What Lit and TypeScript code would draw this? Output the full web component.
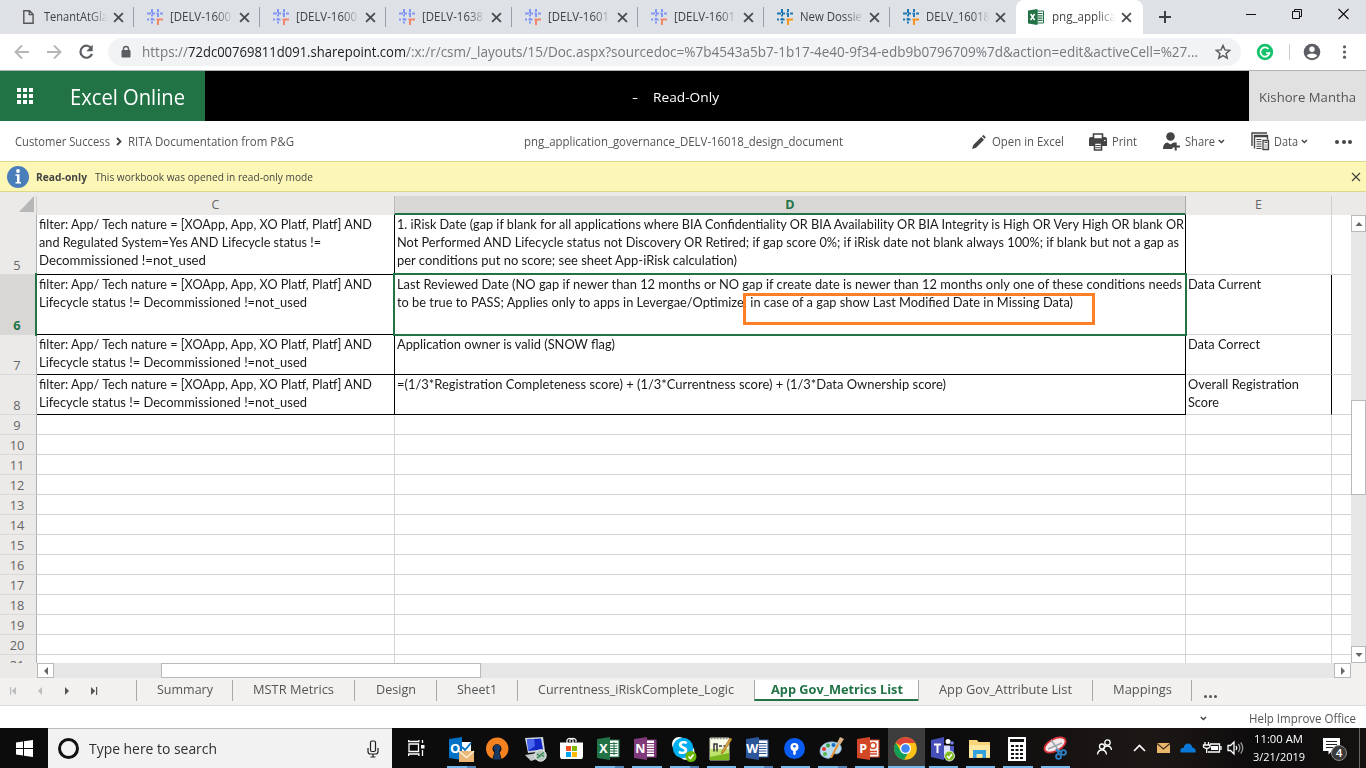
import { LitElement, html, svg, css, nothing } from "lit";
import { customElement, property, query } from "lit/decorators.js";

/** A single line of text, condensed or widened to an exact advance width. */
@customElement("fit-text")
class FitText extends LitElement {
  static styles = css`
    :host { display: block; flex: none; white-space: pre; }
    span { display: inline-block; transform-origin: 0 50%; }
  `;
  @property({ type: Number }) w = 0;
  @property() text = "";
  @query("span") inner!: HTMLElement;
  render() { return html`<span>${this.text}</span>`; }
  updated() {
    this.style.width = this.w + "px";
    const natural = this.inner.offsetWidth ? this.inner.getBoundingClientRect().width : 0;
    if (natural) this.inner.style.transform = `scaleX(${this.w / natural})`;
  }
}

const t = (text: string, w: number, cls = "") => html`<fit-text class=${cls} .text=${text} .w=${w}></fit-text>`;

const hash = (a: string, b: string) => html`<svg width="16" height="16" viewBox="0 0 16 16" fill="none" stroke-width="2">
  <path stroke=${a} d="M5 0v4M5 5.500v2M5 9v2M5 12.500v2M11 0v3M11 4v4M0 4.500h4M5 4.500h3M9.500 4.500h2M13 4.500h3M0 10.500h2M3.500 10.500h4"/>
  <path stroke=${b} d="M9.500 10.500h6.500M11 10v6"/></svg>`;
const page = html`<svg width="16" height="16" viewBox="0 0 16 16"><path d="M2.800 1.700h5.700l3.600 3.600v9H2.800z M8.300 1.900v3.700h3.600" fill="none" stroke="#555" stroke-width="1.400"/></svg>`;
const excelFav = html`<svg width="16" height="16" viewBox="0 0 16 16"><path d="M9 2h6.500v12H9z" fill="#fff" stroke="#217346"/><path d="M10 4.500h4.500M10 6.800h4.500M10 9.100h4.500M10 11.400h4.500" stroke="#217346" stroke-width="1.200"/><path d="M0 1.500 9.500 0v16L0 14.500z" fill="#217346"/><path d="m2.600 5 4 6M6.600 5l-4 6" stroke="#fff" stroke-width="1.500"/></svg>`;
const cross = (s: number, c = "#4a4d51", sw = 1.7) => html`<svg width=${s} height=${s} viewBox="0 0 10 10"><path d="M1 1l8 8M9 1l-8 8" stroke=${c} stroke-width=${sw} fill="none"/></svg>`;
const chev = html`<svg class="chev" width="7" height="5" viewBox="0 0 7 5"><path d="M.8 1l2.600 2.500L6 1" fill="none" stroke="#444" stroke-width="1.500"/></svg>`;
const arrow = (d: string, c = "#666") => html`<svg width="10" height="10" viewBox="0 0 10 10"><path d=${d} fill=${c}/></svg>`;

const tabs: { icon: unknown; text: string; w: number; on?: boolean }[] = [
  { icon: page, text: "TenantAtGla", w: 64 },
  ...["[DELV-1600", "[DELV-1600", "[DELV-1638", "[DELV-1601", "[DELV-1601"].map((x) => ({ icon: hash("#8297f4", "#f0876c"), text: x, w: 61 })),
  { icon: hash("#1f78b4", "#f7941d"), text: "New Dossie", w: 62 },
  { icon: hash("#1f78b4", "#f7941d"), text: "DELV_16018", w: 64 },
  { icon: excelFav, text: "png_applica", w: 64, on: true },
];

const LC: [string, number] = ["Lifecycle status != Decommissioned !=not_used", 268];
const FL: [string, number] = ["filter: App/ Tech nature = [XOApp, App, XO Platf, Platf] AND", 333];
type Line = [string, number];
const rows: { n: number; cls: string; c: Line[]; d: Line[]; e: Line[] }[] = [
  { n: 5, cls: "tall first", c: [FL, ["and Regulated System=Yes AND Lifecycle status !=", 282], ["Decommissioned !=not_used", 167]],
    d: [["1. iRisk Date (gap if blank for all applications where BIA Confidentiality OR BIA Availability OR BIA Integrity is High OR Very High OR blank OR", 787],
      ["Not Performed AND Lifecycle status not Discovery OR Retired; if gap score 0%; if iRisk date not blank always 100%; if blank but not a gap as", 782],
      ["per conditions put no score; see sheet App-iRisk calculation)", 340]], e: [] },
  { n: 6, cls: "tall cur", c: [FL, LC],
    d: [["Last Reviewed Date (NO gap if newer than 12 months or NO gap if create date is newer than 12 months only one of these conditions needs", 785],
      ["to be true to PASS; Applies only to apps in Levergae/Optimize; in case of a gap show Last Modified Date in Missing Data)", 676]],
    e: [["Data Current", 73]] },
  { n: 7, cls: "mid", c: [FL, LC], d: [["Application owner is valid (SNOW flag)", 218]], e: [["Data Correct", 72]] },
  { n: 8, cls: "mid", c: [FL, LC], d: [["=(1/3*Registration Completeness score) + (1/3*Currentness score) + (1/3*Data Ownership score)", 549]],
    e: [["Overall Registration", 111], ["Score", 31]] },
];

const sheets: { text: string; slot: number; w: number; on?: boolean }[] = [
  { text: "Summary", slot: 96, w: 56 }, { text: "MSTR Metrics", slot: 122, w: 81 },
  { text: "Design", slot: 82, w: 40 }, { text: "Sheet1", slot: 81, w: 40 },
  { text: "Currentness_iRiskComplete_Logic", slot: 237, w: 196 },
  { text: "App Gov_Metrics List", slot: 164, w: 132, on: true },
  { text: "App Gov_Attribute List", slot: 174, w: 133 }, { text: "Mappings", slot: 99, w: 59 },
];

/** Office tile: a slanted colour panel with a letter and a sheet behind it. */
const office = (c: string, l: string, art: unknown) => svg`
  <path d="M12 4h11v17H12z" fill="#fff" stroke=${c} stroke-width="1.200"/>${art}
  <path d="M1 3 14 1v23L1 22z" fill=${c}/>
  <text x="7.300" y="17" text-anchor="middle" font-size="12.500" font-weight="700" fill="#fff" font-family="Open Sans, sans-serif">${l}</text>`;
const lines = (c: string) => svg`<path d="M14 7.500h7.500M14 10h7.500M14 12.500h7.500M14 15h7.500M14 17.500h7.500" stroke=${c} stroke-width="1.200"/>`;

const apps: { line: string; art: unknown }[] = [
  { line: "split", art: svg`<path d="M12 6h11v12H12z" fill="#fff"/><path d="m14 11 3 3 6-7" fill="none" stroke="#0072c6" stroke-width="1.800"/><path d="M1 3 14 1v23L1 22z" fill="#0072c6"/><text x="7.300" y="17" text-anchor="middle" font-size="13" font-weight="700" fill="#fff" font-family="Open Sans, sans-serif">O</text><path d="M11 15h15v11H11z" fill="#eab676"/><path d="m11 15 7.500 6.500L26 15" fill="none" stroke="#fff2dc" stroke-width="1.400"/>` },
  { line: "", art: svg`<path d="M7.500 22.800a11.200 11.200 0 1 1 9 .2l-1.800-6.700a4.500 4.500 0 1 0-5.400 0z" fill="#f58220"/><circle cx="12" cy="12" r="3.500" fill="#1a3a66"/><path d="M10.500 13h3l2.300 10.500H8.200z" fill="#1a3a66"/>` },
  { line: "", art: svg`<path d="m3 2 18-1 2 14-17 2z" fill="#ccd6dc"/><path d="m5 3.500 14-1 2 11-14 1.500z" fill="#1428c8"/><path d="m5 3.500 7-.5 1 7-7 5z" fill="#4866ee"/><path d="m3 19 13-2 5 4-12 4z" fill="#c6c9ca"/><circle cx="18.500" cy="19.500" r="5.700" fill="#b8c7bd" stroke="#eef2ef"/><path d="m15 18 3 2-3 2M22 16.500l-3 2 3 2" stroke="#26814c" fill="none" stroke-width="1.300"/>` },
  { line: "", art: svg`<path d="M1 6.500h23v14.500l-1 2H2l-1-2z" fill="#fff"/><path d="M8 7V4a3.500 3.500 0 0 1 6 0v4M11 6V4a3.500 3.500 0 0 1 6 0v2" fill="none" stroke="#fff" stroke-width="1.200"/><path d="M7 10h5v5H7z" fill="#f25022"/><path d="M13 10h5v5h-5z" fill="#7fba00"/><path d="M7 16h5v5H7z" fill="#00a4ef"/><path d="M13 16h5v5h-5z" fill="#ffb900"/>` },
  { line: "split", art: office("#217346", "X", svg`${lines("#217346")}<path d="M18 6v13" stroke="#217346"/>`) },
  { line: "full", art: office("#80397b", "N", svg`${lines("#80397b")}<path d="M21 4h2v17h-2z" fill="#80397b"/>`) },
  { line: "split", art: svg`<circle cx="8" cy="8" r="7" fill="#fff"/><circle cx="15.500" cy="16" r="8" fill="#fff"/><circle cx="12" cy="12" r="10.200" fill="#00aff0"/><text x="11.800" y="18.300" text-anchor="middle" font-size="18" font-weight="700" fill="#fff" font-family="Open Sans, sans-serif">S</text><circle cx="20" cy="20.500" r="5.500" fill="#6bb700"/><path d="m17.500 20.500 2 2 3-4" fill="none" stroke="#fff" stroke-width="1.600"/>` },
  { line: "full", art: svg`<path d="M2 2h19v22H2z" fill="#fafbe8" stroke="#cfd4b8"/><path d="M2 14h19v10H2z" fill="#79b51c"/><path d="M2 13h19v4L2 21z" fill="#bfe36b"/><path d="M3 2.500h18" stroke="#888" stroke-width="1.500" stroke-dasharray="1.500 1.500"/><path d="M6 15.500V8h3v7.500M11 10h3M15.500 10h3" stroke="#333" stroke-width="1.500" fill="none"/><path d="m14 15 8-13 2 1-8 13-2.500 2z" fill="#dca33b" stroke="#8b5a22" stroke-width=".6"/>` },
  { line: "split", art: office("#2b579a", "W", lines("#2b579a")) },
  { line: "full", art: svg`<circle cx="12.500" cy="12.500" r="10.500" fill="#0a5cf0"/><circle cx="12.500" cy="11" r="4" fill="#fff"/><path d="M11.200 13h2.600v5l-1.300 1.200-1.300-1.200z" fill="#fff"/><circle cx="12.500" cy="10.300" r="1.300" fill="#0a5cf0"/>` },
  { line: "split", art: svg`<path d="M1 15C1 9 8 5 15 6s9 6 6 10-7 0-8 3-3 4-6 3-6-3-6-7z" fill="#b9d9ef" stroke="#7fa9c6" stroke-width=".7"/><circle cx="5" cy="13" r="2" fill="#e2382b"/><circle cx="9" cy="9.500" r="2" fill="#35a344"/><circle cx="14.500" cy="9" r="2" fill="#1b6fc0"/><circle cx="6" cy="18" r="2" fill="#55b848"/><path d="m11 22 7-14 2 1-7 13z" fill="#e7912f"/><path d="m18 7 3-6 4 2-4 6z" fill="#d9b384"/>` },
  { line: "full", art: office("#d24726", "P", svg`<circle cx="17" cy="9.500" r="3" fill="none" stroke="#d24726" stroke-width="1.500"/><path d="M13 15.500h8M13 18h8" stroke="#d24726" stroke-width="1.300"/>`) },
  { line: "wide", art: svg`<circle cx="12.500" cy="12.500" r="11.300" fill="#fbc116"/><path d="M12.500 12.500 2.700 6.800A11.300 11.300 0 0 1 22.300 6.900H12.500z" fill="#db4437"/><path d="M2.700 6.800a11.300 11.300 0 0 0 8.300 17l5-8.500-3.500-3-4.900 2.800z" fill="#0f9d58"/><circle cx="12.500" cy="12.500" r="5.500" fill="#fff"/><circle cx="12.500" cy="12.500" r="4.300" fill="#4285f4"/>` },
  { line: "full", art: svg`<circle cx="18" cy="5.500" r="2.500" fill="#fff"/><circle cx="22" cy="7" r="1.800" fill="#7b83eb"/><path d="M13 10h11v7q-3 5-8 3z" fill="#5059c9"/><path d="M14 9.500h6v9h-6z" fill="#dfe0ff"/><path d="M1 4 14 1v23L1 21z" fill="#464eb8"/><path d="M4 8.500h7M7.500 8.500V17" stroke="#fff" stroke-width="2"/><circle cx="19.500" cy="20" r="5" fill="#7fba20" stroke="#fff" stroke-width=".8"/><path d="m17 20 2 2 3-4" fill="none" stroke="#fff" stroke-width="1.500"/>` },
  { line: "full", art: svg`<path d="M2 4h8l1.500 2H23v16H2z" fill="#f7d37a"/><path d="M2 9h21v12H2z" fill="#fce8a0"/><path d="M6 22v-8h13v8h-3.500v-4h-6v4z" fill="#33a0df"/>` },
  { line: "full", art: svg`<path d="M4 1h18v24H4z" fill="#fff"/><path d="M6 4.500h14" stroke="#111" stroke-width="3"/><path d="M7 10h3M11.500 10h3M16 10h3M7 14h3M11.500 14h3M16 14h3M7 18h3M11.500 18h3M16 18h3M7 22h3M11.500 22h3M16 22h3" stroke="#111" stroke-width="1.800"/>` },
  { line: "full", art: svg`<ellipse cx="13" cy="9" rx="11.500" ry="6" transform="rotate(-28 13 9)" fill="#f6e9ea" stroke="#d7323b" stroke-width="1.800"/><path d="m9 4 9 12M6 13l14-6" stroke="#9ba7b0" stroke-width="1.500"/><circle cx="16.500" cy="20.500" r="2.400" fill="none" stroke="#2e83c8" stroke-width="1.800"/><circle cx="21.500" cy="16.500" r="2.400" fill="none" stroke="#2e83c8" stroke-width="1.800"/><path d="m14 13 3 5M14 14l6 2" stroke="#2e83c8" stroke-width="1.600"/>` },
];

@customElement("app-root")
class AppRoot extends LitElement {
  static styles = css`
    :host { display: flex; flex-direction: column; width: 1366px; height: 768px; overflow: hidden; background: #fff; color: #444;
      font-family: "Open Sans", "Noto Sans", sans-serif; font-size: 12px; line-height: 18px; }
    * { box-sizing: border-box; }
    svg { display: block; flex: none; }
    .row { display: flex; align-items: center; flex: none; }

    .strip { height: 34px; background: #dee1e6; padding-left: 8px; align-items: stretch; }
    .tab { width: 126px; flex: none; display: flex; align-items: center; padding-left: 13px; }
    .tab .line { width: 1px; height: 20px; flex: none; background: #9b9ea4; margin: 0 -1px 0 9px; }
    .tab .name { width: 65px; flex: none; overflow: hidden; margin: 0 4px 0 7px; font-size: 12px; color: #3f4246;
      -webkit-mask-image: linear-gradient(90deg, #000 70%, transparent 98%); mask-image: linear-gradient(90deg, #000 70%, transparent 98%); }
    .tab.on { background: #fff; border-radius: 8px 8px 0 0; width: 127px; padding-left: 12px; }
    .tab.on .name { color: #444; margin: 0 4px 0 8px; }
    .plus { margin: 11px 75px 0 16px; }
    .win { display: flex; gap: 35px; padding-top: 8px; }

    .nav { height: 36px; padding-left: 14px; }
    .omni { width: 1133px; height: 28px; border-radius: 14px; background: #f1f3f4; margin-left: 14px; padding-left: 12px; font-size: 14.500px; color: #75797e; }
    .omni .host { color: #202124; }
    .omni svg.lock { margin-right: 10px; }
    .omni .star { margin-left: 17px; }
    .edge { height: 1px; background: #b4b4b4; flex: none; }

    .brand { height: 50px; background: #000; align-items: stretch; }
    .brand .green { width: 205px; background: #217346; display: flex; align-items: center; color: #fff; padding-left: 17px; }
    .xl { font-size: 21px; margin-left: 36px; line-height: 28px; padding-top: 2px; }
    .ro { display: flex; align-items: center; color: #fff; font-size: 13px; font-weight: 500; gap: 15px; margin-left: 427px; padding-top: 2px; }
    .user { width: 117px; background: #e1e1e1; margin-left: auto; font-size: 13.500px; color: #555; display: flex; align-items: center; padding: 2px 0 0 10px; }

    .cmd { height: 40px; padding-top: 1px; padding-left: 15px; color: #555; font-size: 12.300px; }
    .gt { margin: 0 6px; }
    .doc { margin: 0 129px 0 230px; }
    .g7 { margin-left: 6px; } .g5 { margin-left: 5px; } .g4 { margin-left: 4px; }
    .printer { margin-left: 25px; }
    .person, .table { margin-left: 26px; }
    .chev { margin-left: 3px; }
    .dots { display: flex; gap: 2.600px; margin-left: 27px; padding-top: 1px; }
    .dots i { width: 4px; height: 4px; border-radius: 50%; background: #444; }

    .info { height: 31px; background: #fcf7b6; border-top: 1px solid #dcd88a; border-bottom: 1px solid #dcd88a; padding-left: 7px; font-size: 11.300px; color: #444; padding-top: 1px; }
    .info .b { font-weight: 700; margin: 0 8px 0 7px; }
    .info .x { margin-left: auto; margin-right: 5px; }

    .heads { height: 23px; background: #ebeae9; padding-top: 4px; align-items: stretch; flex: none; display: flex; font-size: 12.500px; color: #666; }
    .corner { width: 37px; border-right: 1px solid #cfcfcf; padding-left: 19px; }
    .heads .h { height: 19px; display: flex; justify-content: center; align-items: center; border-right: 1px solid #cfcfcf; line-height: 17px; padding-bottom: 2px; }
    .heads .hd { background: #d8d7d6; color: #217346; font-weight: 700; border-bottom: 2px solid #217346; margin-left: -1px; width: 792px; border-left: 1px solid #bbb; border-right-color: #aaa; padding: 0; }
    .c { width: 358px; } .d { width: 791px; } .e { width: 146px; } .f { width: 19px; }

    .body { display: flex; flex: none; height: 448px; }
    .sheet { width: 1351px; overflow: hidden; position: relative; }
    .r { display: flex; height: 20px; }
    .tall { height: 60px; } .mid { height: 40px; }
    .n { width: 37px; flex: none; background: #ebeae9; border-right: 1px solid #b1b1b1; border-bottom: 1px solid #d9d9d9; display: flex; align-items: flex-end; justify-content: center; font-size: 12.800px; line-height: 17px; color: #666; padding-right: 2px; }
    .cur .n { background: #d8d7d6; color: #217346; font-weight: 700; }
    .cell { flex: none; border-right: 1px solid #d4d4d4; border-bottom: 1px solid #d4d4d4; padding: 0 0 0 2px; overflow: hidden;
      font-family: Lato, "Open Sans", sans-serif; font-size: 13.300px; line-height: 18px; color: #1a1a1a; }
    .tall .c, .tall .d, .mid .c, .mid .d { border-color: #000; }
    .cur .e, .mid .e { border-right-color: #000; }
    .f { border-right: 0; }
    .sel { position: absolute; left: 393px; top: 58px; width: 794px; height: 63px; border: 2px solid #217346; }
    .selrow { position: absolute; left: 35px; top: 58px; width: 2px; height: 63px; background: #217346; }
    .mark { position: absolute; left: 743px; top: 78px; width: 352px; height: 32px; border: 3px solid #ff7f27; }

    .vs { width: 15px; background: #e6e6e6; display: flex; flex-direction: column; }
    .btn { background: #fff; border: 1px solid #b9b9b9; display: flex; align-items: center; justify-content: center; flex: none; }
    .vs .btn { width: 15px; height: 17px; }
    .vs .thumb { height: 95px; margin-top: 168px; }
    .vs .down { margin-top: auto; }
    .hs { height: 15px; background: #e6e6e6; align-items: stretch; }
    .hs .pad { width: 37px; background: #ebeae9; }
    .hs .btn { width: 17px; }
    .hs .thumb { width: 320px; margin-left: 107px; }
    .hs .right { margin-left: auto; }
    .hs .end { width: 15px; background: #f2f1f0; }

    .sheets { height: 28px; background: #f2f1f0; border-bottom: 1px solid #dcdcdc; padding: 2px 0 4px 8px; align-items: stretch; font-size: 12.600px; color: #555; }
    .pager { display: flex; align-items: center; width: 128px; gap: 17px; }
    .s { display: flex; justify-content: center; border-left: 1px solid #a8a8a8; padding-top: 1px; line-height: 17px; flex: none; }
    .s.on { background: #fff; color: #217346; font-weight: 700; border-bottom: 2px solid #217346; }
    .more { border-left: 1px solid #a8a8a8; padding: 15px 0 0 12px; display: flex; gap: 2px; }
    .more i { width: 3px; height: 3px; border-radius: 50%; background: #555; }
    .status { height: 22px; padding: 3px 10px 0 0; justify-content: flex-end; font-size: 12.200px; color: #555; }
    .status .go { margin-left: 42px; }

    .bar { height: 40px; background: linear-gradient(90deg, #0c0c0c 70%, #1d1816 84%, #0d0c0c 92%, #151211); align-items: stretch; color: #fff; }
    .start { width: 48px; flex: none; display: flex; align-items: center; justify-content: center; }
    .search { width: 344px; flex: none; background: #f2f2f2; border-top: 1px solid #bbb; display: flex; align-items: center; color: #2f2f2f; font-size: 14.500px; padding-left: 9px; }
    .search .q { margin: 0 150px 0 9px; }
    .ring { margin-left: 1px; }
    .tv { width: 51px; flex: none; display: flex; align-items: center; justify-content: center; padding-right: 3px; }
    .app { width: 37.100px; padding: 8px 4px 0; display: flex; flex-direction: column; justify-content: space-between; flex: none; }
    .app svg { margin-left: 1px; }
    .u { height: 2px; }
    .full .u, .wide .u { background: #76b9ed; }
    .split .u { background: linear-gradient(90deg, #76b9ed 20px, #5284b5 20px); }
    .wide { background: #3d3d3d; padding-left: 0; padding-right: 0; }
    .wide svg { margin-left: 5px; }
    .tray { display: flex; align-items: center; padding-left: 22px; }
    .clock { display: flex; flex-direction: column; align-items: center; width: 54px; flex: none; margin-left: -4px; font-size: 11.500px; line-height: 18px; padding-bottom: 1px; }
    .note { margin-left: 17px; }
    .peek { width: 1px; height: 40px; background: #666; margin-left: 10px; }
  `;

  render() {
    return html`
      <div class="row strip">
        ${tabs.map((x, i) => html`<div class="tab ${x.on ? "on" : ""}">${x.icon}
          <div class="name">${t(x.text, x.w)}</div>${cross(11)}
          ${x.on || i === 7 ? nothing : html`<div class="line"></div>`}</div>`)}
        <svg class="plus" width="12" height="12" viewBox="0 0 12 12"><path d="M6 0v12M0 6h12" stroke="#3c4043" stroke-width="2"/></svg>
        <div class="win">
          <svg width="11" height="12" viewBox="0 0 11 12"><path d="M0 6.500h10" stroke="#111"/></svg>
          <svg width="11" height="12" viewBox="0 0 11 12"><path d="M.5 3.500h7v7h-7zM2.500 3.500v-2h7v7h-2" stroke="#111" fill="none"/></svg>
          <svg width="11" height="12" viewBox="0 0 11 12"><path d="M.5 1l10 10M10.500 1l-10 10" stroke="#111" stroke-width="1.100"/></svg>
        </div>
      </div>
      <div class="row nav">
        <svg width="80" height="16" viewBox="0 0 80 16" fill="none" stroke="#b5b6b8" stroke-width="1.900"><path d="M15 8H2M8 1.500 1.500 8 8 14.500M33 8h13M40 1.500 46.500 8 40 14.500"/><path d="M77.500 4.500A6 6 0 1 0 78 10" stroke="#5a5d61" stroke-width="2.200"/><path d="M78.700.8v6.400h-6.400z" fill="#5a5d61" stroke="none"/></svg>
        <div class="row omni">
          <svg class="lock" width="12" height="14" viewBox="0 0 12 14"><path d="M2 5.500h8v6.500H2z" fill="#5a5d61" stroke="#5a5d61"/><path d="M3.500 5.500V4a2.500 2.500 0 0 1 5 0v1.500" fill="none" stroke="#5a5d61" stroke-width="1.400"/></svg>
          ${t("https://", 46)}${t("72dc00769811d091.sharepoint.com", 218, "host")}${t("/:x:/r/csm/_layouts/15/Doc.aspx?sourcedoc=%7b4543a5b7-1b17-4e40-9f34-edb9b0796709%7d&action=edit&activeCell=%27...", 792)}
          <svg class="star" width="16" height="16" viewBox="0 0 16 16"><path d="m8 1.500 1.900 4.400 4.800.4-3.600 3.200 1.100 4.700L8 11.700l-4.200 2.500 1.100-4.700L1.300 6.300l4.800-.4z" fill="none" stroke="#5a5d61" stroke-width="1.500"/></svg>
        </div>
        <svg width="110" height="20" viewBox="0 0 110 20"><circle cx="24" cy="10" r="8.200" fill="#15c26b"/><path d="M27.500 7A4.600 4.600 0 1 0 28.500 11h-3.500" fill="none" stroke="#fff" stroke-width="1.700"/><path d="M48.500 2v16" stroke="#ccc"/><circle cx="71" cy="10" r="8.300" fill="#5a5d61"/><circle cx="71" cy="7.300" r="2.700" fill="#fff"/><path d="M65.800 13.800c1.500-3 8.900-3 10.400 0-2.700 3.200-7.700 3.200-10.400 0z" fill="#fff"/><g fill="#5a5d61"><circle cx="103.500" cy="4.800" r="1.600"/><circle cx="103.500" cy="10" r="1.600"/><circle cx="103.500" cy="15.200" r="1.600"/></g></svg>
      </div>
      <div class="edge"></div>
      <div class="row brand">
        <div class="green"><svg width="17" height="17" viewBox="0 0 17 17" fill="#fff"><path d="M0 0h4v4H0zM6 0h4v4H6zM12 0h4v4h-4zM0 6h4v4H0zM6 6h4v4H6zM12 6h4v4h-4zM0 12h4v4H0zM6 12h4v4H6zM12 12h4v4h-4z"/></svg>${t("Excel Online", 115, "xl")}</div>
        <div class="ro">${t("-", 6)}${t("Read-Only", 66)}</div>
        <div class="user">${t("Kishore Mantha", 97)}</div>
      </div>
      <div class="row cmd">
        ${t("Customer Success", 95)}<svg class="gt" width="6" height="9" viewBox="0 0 6 9"><path d="M1 1l3.500 3.500L1 8" fill="none" stroke="#444" stroke-width="1.800"/></svg>${t("RITA Documentation from P&G", 166)}
        <div class="doc">${t("png_application_governance_DELV-16018_design_document", 319)}</div>
        <svg width="14" height="14" viewBox="0 0 14 14" fill="#444"><path d="M0 14l1.300-4L9.300 2l2.700 2.700-8 8zM10 1.300 11.200 0q1.300 0 2.500 2.500l-1 1.300z"/></svg>
        <div class="g7">${t("Open in Excel", 72)}</div>
        <svg class="printer" width="18" height="18" viewBox="0 0 18 18"><path d="M0 6q0-2 2-2h14q2 0 2 2v7H0z" fill="#444"/><path d="M4.500 1h9v5h-9zM5.500 10h7v7h-7z" fill="#fff" stroke="#444" stroke-width="1.600"/><path d="M6.500 12.500h5M6.500 14.700h5" stroke="#444"/><path d="M15 7.500h1.500" stroke="#fff"/></svg>
        <div class="g5">${t("Print", 25)}</div>
        <svg class="person" width="18" height="19" viewBox="0 0 18 19" fill="#444"><circle cx="7.500" cy="4.500" r="4.300"/><path d="M0 17q0-6 4.500-6.500l3 2 3-2 2 .5v3h-3v3z"/><path d="M12.700 10.500v8M8.700 14.500h8.300" stroke="#444" stroke-width="2"/></svg>
        <div class="g4">${t("Share", 30)}</div>${chev}
        <svg class="table" width="19" height="19" viewBox="0 0 19 19" fill="none" stroke="#444"><path d="M1 14V1h15M3.500 16.500v-13h13v4M3.500 4.500h13" stroke-width="1.400"/><path d="M5.500 7.500h5M5.500 9.700h5M5.500 12h5M5.500 14.300h5M5.500 16.500h5"/><path d="M12 8.500h5.500v9H12z" fill="#fff" stroke-width="1.300"/><path d="M13.500 10.500h3M13.500 13h1M15.500 13h1M13.500 15h1M15.500 15h1"/></svg>
        <div class="g4">${t("Data", 24)}</div>${chev}
        <div class="dots"><i></i><i></i><i></i></div>
      </div>
      <div class="row info">
        <svg width="22" height="22" viewBox="0 0 22 22"><circle cx="11" cy="11" r="11" fill="#4a7ebb"/><circle cx="11" cy="5" r="1.900" fill="#fff"/><path d="M8.500 8.300h4v7.700H14v1.500H8.500V16H10V9.800H8.500z" fill="#fff"/></svg>
        ${t("Read-only", 51, "b")}${t("This workbook was opened in read-only mode", 218)}
        <div class="x">${cross(10, "#444", 1.2)}</div>
      </div>
      <div class="heads">
        <div class="corner"><svg width="15" height="16" viewBox="0 0 15 16"><path d="M15 0v16H0z" fill="#b7b7b7"/></svg></div>
        <div class="h c">C</div><div class="h hd">D</div><div class="h e">E</div>
      </div>
      <div class="body">
        <div class="sheet">
          ${rows.map((r) => html`<div class="r ${r.cls}"><div class="n">${r.n}</div>
            <div class="cell c">${r.c.map((l) => t(l[0], l[1]))}</div>
            <div class="cell d">${r.d.map((l) => t(l[0], l[1]))}</div>
            <div class="cell e">${r.e.map((l) => t(l[0], l[1]))}</div><div class="cell f"></div></div>`)}
          ${Array.from({ length: 13 }, (_, i) => html`<div class="r"><div class="n">${i + 9}</div><div class="cell c"></div><div class="cell d"></div><div class="cell e"></div><div class="cell f"></div></div>`)}
          <div class="sel"></div><div class="selrow"></div><div class="mark"></div>
        </div>
        <div class="vs"><div class="btn">${arrow("M1.500 7 5 3l3.500 4z")}</div><div class="btn thumb"></div><div class="btn down">${arrow("M1.500 3h7L5 7z")}</div></div>
      </div>
      <div class="row hs"><div class="pad"></div><div class="btn">${arrow("M7 1v8L3 5z")}</div><div class="btn thumb"></div><div class="btn right">${arrow("M3 1v8l4-4z")}</div><div class="end"></div></div>
      <div class="row sheets">
        <div class="pager">${arrow("M2 1h1.200v8H2zM8 1v8L3.800 5z", "#bdbdbd")}${arrow("M7 1v8L3 5z", "#bdbdbd")}${arrow("M3 1v8l4-4z", "#555")}${arrow("M2 1v8l4.200-4zM7 1h1.200v8H7z", "#555")}</div>
        ${sheets.map((s) => html`<div class="s ${s.on ? "on" : ""}" style="width:${s.slot}px">${t(s.text, s.w)}</div>`)}
        <div class="more"><i></i><i></i><i></i></div>
      </div>
      <div class="row status">${chev}<div class="go">${t("Help Improve Office", 107)}</div></div>
      <div class="row bar">
        <div class="start"><svg width="17" height="17" viewBox="0 0 17 17" fill="#fff"><path d="M0 2.500 7 1.500V8H0zM8 1.300 17 0v8H8zM0 9h7v6.500l-7-1zM8 9h9v8l-9-1.300z"/></svg></div>
        <div class="search"><svg class="ring" width="22" height="22" viewBox="0 0 22 22"><circle cx="10.500" cy="10.500" r="9" fill="none" stroke="#111" stroke-width="3"/></svg>
          <div class="q">${t("Type here to search", 128)}</div>
          <svg width="12" height="18" viewBox="0 0 12 18" fill="none" stroke="#222" stroke-width="1.200"><rect x="3.500" y="1" width="5" height="10.500" rx="1.500"/><path d="M1 8v3.500q0 2.500 2.500 2.500h5q2.500 0 2.500-2.500V8M6 14v3M3.500 17h5"/></svg></div>
        <div class="tv"><svg width="17" height="16" viewBox="0 0 17 16" fill="none" stroke="#fff" stroke-width="1.300"><path d="M1 4h9.500v7.500H1zM.6 0v1.500h10.300V0M.6 16v-2h10.300v2M14.500 0v3M14.500 10v6"/><path d="M13 5h3.500v3.500H13z" fill="#fff" stroke="none"/></svg></div>
        ${apps.map((a) => html`<div class="app ${a.line}"><svg width="28" height="27" viewBox="0 0 28 27">${a.art}</svg><div class="u"></div></div>`)}
        <div class="tray">
          <svg width="160" height="24" viewBox="0 0 160 24" fill="none" stroke="#fff" stroke-width="1.300">
            <circle cx="11.500" cy="6.500" r="2.700"/><path d="M7.500 14q.5-4 4-4t4 4"/><circle cx="6" cy="10.500" r="2.500"/><path d="M1.500 18.500q.5-4.500 4.500-4.500t4.500 4.500"/>
            <path d="m38 15 5.500-5.500L49 15" stroke-width="1.600"/>
            <path d="M61 7h13v10H61z" fill="#e8b76c" stroke="none"/><path d="m61 7.500 6.500 5.500L74 7.500" stroke="#463518"/>
            <path d="M84.500 16.500q-1-5 3-4.500 1.500-6 6.500-4 2 1 2.500 3.500 4 1 3 5z" fill="#0a78d7" stroke="none"/>
            <path d="M114 8h9.500v8H112M125 10v4"/><path d="M115 10h7v4h-7z" fill="#fff" stroke="none"/><path d="M109 6v3M112.500 6v3M107.500 9h6.500v2q-3 3-6.500 0zM110.700 12v5"/>
            <path d="M132 9.500h2.500l3.500-3.500v12l-3.500-3.500H132z"/><path d="M140 10q1.500 2 0 4"/><path d="M142.300 8q3 4 0 8M144.700 6.500q4 5.500 0 11" stroke="#999"/>
          </svg>
          <div class="clock">${t("11:00 AM", 49)}${t("3/21/2019", 52)}</div>
          <svg class="note" width="26" height="26" viewBox="0 0 26 26"><path d="M0 3h17v13H9l-3.500 3.500V16H0z" fill="#fff"/><path d="M3 6.500h11M3 9.500h11M3 12.500h7" stroke="#222" stroke-width="1.200"/><circle cx="16" cy="18" r="7.500" fill="#3a3a3a" stroke="#888"/><text x="16" y="22.300" font-size="11.500" text-anchor="middle" font-weight="600" fill="#fff" font-family="Open Sans, sans-serif">4</text></svg>
          <div class="peek"></div>
        </div>
      </div>`;
  }
}
